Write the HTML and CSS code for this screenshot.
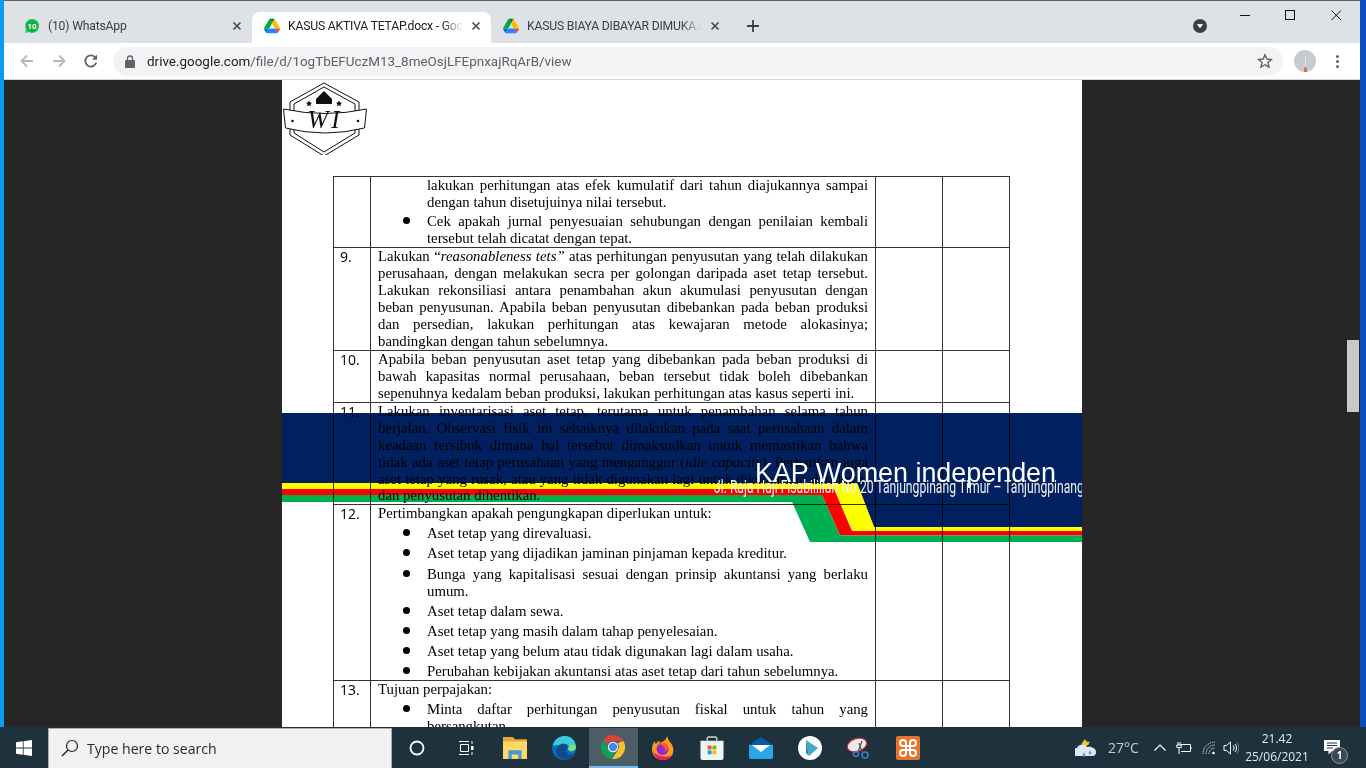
FILE: index.html
```html
<!DOCTYPE html>
<html>
<head>
    <title>KASUS AKTIVA TETAP.docx</title>
    <link rel="stylesheet" href="styles.css">
</head>
<body>
    <svg class="defs" width="0" height="0">
        <symbol id="drive" viewBox="0 0 87.3 78">
            <path d="M6.6 66.85l3.85 6.65c.8 1.4 1.95 2.5 3.3 3.3L27.5 53H0c0 1.55.4 3.1 1.2 4.5z" fill="#0066da"/>
            <path d="M43.65 25L29.9 1.2c-1.35.8-2.5 1.9-3.3 3.3L1.2 48.5A9.06 9.06 0 000 53h27.5z" fill="#00ac47"/>
            <path d="M73.55 76.8c1.35-.8 2.5-1.9 3.3-3.3l1.6-2.75 7.65-13.25c.8-1.4 1.2-2.95 1.2-4.5H59.8l5.85 11.5z" fill="#ea4335"/>
            <path d="M43.65 25L57.4 1.2C56.05.4 54.5 0 52.9 0H34.4c-1.6 0-3.15.45-4.5 1.2z" fill="#00832d"/>
            <path d="M59.8 53H27.5L13.75 76.8c1.35.8 2.9 1.2 4.5 1.2h50.8c1.6 0 3.15-.45 4.5-1.2z" fill="#2684fc"/>
            <path d="M73.4 26.5L60.7 4.5c-.8-1.4-1.95-2.5-3.3-3.3L43.65 25 59.8 53h27.45c0-1.55-.4-3.1-1.2-4.5z" fill="#ffba00"/>
        </symbol>
        <symbol id="close" viewBox="0 0 10 10">
            <path d="M1.5 1.5l7 7M8.5 1.5l-7 7" fill="none" stroke="#4a4d52" stroke-width="1.7"/>
        </symbol>
    </svg>

    <div class="window">
        <div class="tabstrip">
            <div class="tab">
                <svg class="favicon" viewBox="0 0 16 16">
                    <path d="M1 15l1-3.8A7 7 0 1 1 4.700 14z" fill="#25d366"/>
                    <circle cx="8" cy="8" r="6.200" fill="#13b04a"/>
                    <text x="8" y="10.800" class="fav-num">10</text>
                </svg>
                <span class="tab-title">(10) WhatsApp</span>
                <svg class="tab-x"><use href="#close"/></svg>
            </div>
            <div class="tab active">
                <svg class="favicon"><use href="#drive"/></svg>
                <span class="tab-title">KASUS AKTIVA TETAP.docx - Google Drive</span>
                <svg class="tab-x"><use href="#close"/></svg>
            </div>
            <div class="tab">
                <svg class="favicon"><use href="#drive"/></svg>
                <span class="tab-title">KASUS BIAYA DIBAYAR DIMUKA.docx - Google Drive</span>
                <svg class="tab-x"><use href="#close"/></svg>
            </div>
            <svg class="newtab" viewBox="0 0 12 12"><path d="M6 0v12M0 6h12" stroke="#3c4043" stroke-width="1.800"/></svg>
            <svg class="tabsearch" viewBox="0 0 14 14">
                <circle cx="7" cy="7" r="7" fill="#3c4043"/>
                <path d="M3.700 5h6.600L7 9.300z" fill="#fff"/>
            </svg>
            <div class="winbtns">
                <svg viewBox="0 0 46 29"><path d="M18 14.500h10" stroke="#111" stroke-width="1"/></svg>
                <svg viewBox="0 0 46 29"><rect x="17.500" y="9.500" width="9" height="9" fill="none" stroke="#111"/></svg>
                <svg viewBox="0 0 46 29"><path d="M17.500 9.500l9.500 9.500M27 9.500L17.500 19" stroke="#111" stroke-width="1" fill="none"/></svg>
            </div>
        </div>

        <div class="toolbar">
            <svg class="nav" viewBox="0 0 16 16"><path d="M14 8H3M8 2.500L2.500 8 8 13.500" fill="none" stroke="#b4b7bb" stroke-width="1.800"/></svg>
            <svg class="nav" viewBox="0 0 16 16"><path d="M2 8h11M8 2.500L13.500 8 8 13.500" fill="none" stroke="#b4b7bb" stroke-width="1.800"/></svg>
            <svg class="nav" viewBox="0 0 16 16"><path d="M13.300 9.500A5.600 5.600 0 1 1 12 4.100" fill="none" stroke="#5f6368" stroke-width="1.800"/><path d="M14 1.500v5.200H8.800z" fill="#5f6368"/></svg>
            <div class="omnibox">
                <svg class="lock" viewBox="0 0 10 13"><path d="M2.500 5V3.500a2.500 2.500 0 0 1 5 0V5" fill="none" stroke="#5f6368" stroke-width="1.300"/><rect y="5" width="10" height="8" rx="1" fill="#5f6368"/></svg>
                <span class="url"><b>drive.google.com</b>/file/d/1ogTbEFUczM13_8meOsjLFEpnxajRqArB/view</span>
                <svg class="star" viewBox="0 0 16 16"><path d="M8 1.800l1.900 4.200 4.500.5-3.400 3 1 4.500L8 11.700 4 14l1-4.500-3.400-3 4.500-.5z" fill="none" stroke="#5f6368" stroke-width="1.400"/></svg>
            </div>
            <svg class="avatar" viewBox="0 0 22 22">
                <circle cx="11" cy="11" r="11" fill="#c4ccd2"/>
                <path d="M10 22l.5-5h2l.5 5z" fill="#d9683a"/>
                <path d="M11.500 17V7" stroke="#e3e7ea" stroke-width="1"/>
            </svg>
            <div class="menu"><i></i><i></i><i></i></div>
        </div>

        <div class="viewer">
            <div class="page">
                <div class="page-head">
                    <svg class="logo" viewBox="0 0 84 73">
                        <path d="M41 1L7 20v33l34 21 35-21V20z" fill="#fff" stroke="#111" stroke-width="1"/>
                        <path d="M41 5L11 22v29l30 19 31-19V22z" fill="#fff" stroke="#111" stroke-width="1"/>
                        <path d="M41 9l8 8v5H33v-5z" fill="#111"/>
                        <path d="M26 18.500l1 2 2 .3-1.500 1.500.4 2-1.900-1-1.900 1 .4-2-1.500-1.500 2-.3zM56 18.500l1 2 2 .3-1.500 1.500.4 2-1.900-1-1.900 1 .4-2-1.500-1.500 2-.3z" fill="#111"/>
                        <path d="M0.500 27Q42 36 83.500 27L81.500 46Q42 56 2.500 46z" fill="#fff" stroke="#111" stroke-width="1"/>
                        <circle cx="9.500" cy="39" r="1.300" fill="#111"/>
                        <circle cx="75" cy="39" r="1.300" fill="#111"/>
                        <text x="42" y="46" class="logo-text">WI</text>
                    </svg>
                </div>

                <svg class="banner" viewBox="0 0 800 129">
                    <path d="M0 0H800V114H592L575 70H0z" fill="#002060"/>
                    <path d="M0 70H575L592 114H800V118H570L552 76H0z" fill="#ffff00"/>
                    <path d="M0 76H552L570 118H800V122.500H558L540 82H0z" fill="#ff0000"/>
                    <path d="M0 82H540L558 122.500H800V129H528L510 89H0z" fill="#00b050"/>
                </svg>

                <table class="doc">
                    <colgroup>
                        <col class="c-no"><col class="c-text"><col class="c-tick"><col class="c-tick">
                    </colgroup>
                    <tr class="row-cont">
                        <td></td>
                        <td>
                            <p class="cont">lakukan perhitungan atas efek kumulatif dari tahun diajukannya sampai dengan tahun disetujuinya nilai tersebut.</p>
                            <ul>
                                <li>Cek apakah jurnal penyesuaian sehubungan dengan penilaian kembali tersebut telah dicatat dengan tepat.</li>
                            </ul>
                        </td>
                        <td></td><td></td>
                    </tr>
                    <tr>
                        <td class="num">9.</td>
                        <td><p>Lakukan “<em>reasonableness tets”</em> atas perhitungan penyusutan yang telah dilakukan perusahaan, dengan melakukan secra per golongan daripada aset tetap tersebut. Lakukan rekonsiliasi antara penambahan akun akumulasi penyusutan dengan beban penyusunan. Apabila beban penyusutan dibebankan pada beban produksi dan persedian, lakukan perhitungan atas kewajaran metode alokasinya; bandingkan dengan tahun sebelumnya.</p></td>
                        <td></td><td></td>
                    </tr>
                    <tr>
                        <td class="num">10.</td>
                        <td><p>Apabila beban penyusutan aset tetap yang dibebankan pada beban produksi di bawah kapasitas normal perusahaan, beban tersebut tidak boleh dibebankan sepenuhnya kedalam beban produksi, lakukan perhitungan atas kasus seperti ini.</p></td>
                        <td></td><td></td>
                    </tr>
                    <tr class="row-tight">
                        <td class="num">11.</td>
                        <td><p>Lakukan inventarisasi aset tetap, terutama untuk penambahan selama tahun berjalan. Observasi fisik ini sebaiknya dilakukan pada saat perusahaan dalam keadaan tersibuk dimana hal tersebut dimaksudkan untuk memastikan bahwa tidak ada aset tetap perusahaan yang menganggur (<em>idle capacity</em>). Perhatikan juga aset tetap yang rusak, atau yang tidak digunakan lagi untuk dikeluarkan dari kartu dan penyusutan dihentikan.</p></td>
                        <td></td><td></td>
                    </tr>
                    <tr>
                        <td class="num">12.</td>
                        <td>
                            <p>Pertimbangkan apakah pengungkapan diperlukan untuk:</p>
                            <ul>
                                <li>Aset tetap yang direvaluasi.</li>
                                <li>Aset tetap yang dijadikan jaminan pinjaman kepada kreditur.</li>
                                <li>Bunga yang kapitalisasi sesuai dengan prinsip akuntansi yang berlaku umum.</li>
                                <li>Aset tetap dalam sewa.</li>
                                <li>Aset tetap yang masih dalam tahap penyelesaian.</li>
                                <li>Aset tetap yang belum atau tidak digunakan lagi dalam usaha.</li>
                                <li>Perubahan kebijakan akuntansi atas aset tetap dari tahun sebelumnya.</li>
                            </ul>
                        </td>
                        <td></td><td></td>
                    </tr>
                    <tr>
                        <td class="num">13.</td>
                        <td>
                            <p>Tujuan perpajakan:</p>
                            <ul>
                                <li>Minta daftar perhitungan penyusutan fiskal untuk tahun yang bersangkutan.</li>
                            </ul>
                        </td>
                        <td></td><td></td>
                    </tr>
                </table>

                <div class="banner-title">KAP Women independen</div>
                <div class="banner-addr"><span>Jl. Raja Haji Fisabilillah No.20 Tanjungpinang Timur – Tanjungpinang</span></div>
            </div>
            <div class="scrollthumb"></div>
        </div>
    </div>

    <div class="taskbar">
        <div class="start">
            <svg viewBox="0 0 16 16"><path d="M0 2.300L6.800 1.300V7.600H0zM7.600 1.200L16 0V7.600H7.600zM0 8.400H6.800V14.700L0 13.700zM7.600 8.400H16V16L7.600 14.800z" fill="#fff"/></svg>
        </div>
        <div class="search">
            <svg viewBox="0 0 18 18"><circle cx="11" cy="7" r="5.500" fill="none" stroke="#222" stroke-width="1.200"/><path d="M7 11L1 17" stroke="#222" stroke-width="1.400"/></svg>
            <span>Type here to search</span>
        </div>
        <div class="tb-icons">
            <div class="tb-item">
                <svg viewBox="0 0 16 16"><circle cx="8" cy="8" r="6.500" fill="none" stroke="#fff" stroke-width="1.800"/></svg>
            </div>
            <div class="tb-item">
                <svg viewBox="0 0 16 16"><path d="M1 1.500h10M1 14.500h10M2.500 4.500h8v7h-8z" fill="none" stroke="#fff" stroke-width="1"/><path d="M14 1v3M14 12v3" stroke="#fff"/><rect x="13" y="6" width="2.500" height="4" fill="#fff"/></svg>
            </div>
            <div class="tb-item">
                <svg viewBox="0 0 22 20"><path d="M0 0h9l2 2h11v18H0z" fill="#e8a93a"/><rect y="4" width="22" height="16" fill="#ffd768"/><path d="M5 20v-8h12v8h-3v-4H8v4z" fill="#3f9ad6"/></svg>
            </div>
            <div class="tb-item">
                <svg viewBox="0 0 24 24">
                    <circle cx="12" cy="12" r="12" fill="#0f6cbd"/>
                    <path d="M1 9C3 2 9 0 13 0c6 0 10 4 11 10 .5 4-3 6-6 5-3-1-2-3-1-4-1-3-4-4-7-3-4 1-7 2-9 1z" fill="#3ccbda"/>
                    <path d="M24 11c0 2-3 5-6 4-3-1-2-3-1-4 1-3 6-3 7 0z" fill="#7fe06b"/>
                    <path d="M9 8c3-1 6 0 7 3-3 2-3 5 0 7 2 1 4 1 6 0-3 5-9 7-14 4C3 19 2 13 9 8z" fill="#114a8b"/>
                </svg>
            </div>
            <div class="tb-item selected">
                <svg viewBox="0 0 24 24">
                    <path d="M12 0a12 12 0 0 1 10.400 6H12a6 6 0 0 0-5.700 4L2.600 4.300A12 12 0 0 1 12 0z" fill="#db4437"/>
                    <path d="M22.400 6A12 12 0 0 1 11 24l5.300-8A6 6 0 0 0 16.500 8z" fill="#fbc02d"/>
                    <path d="M2.600 4.300L7.500 13a5.500 5.500 0 0 0 7.500 3.500L11 24A12 12 0 0 1 2.600 4.300z" fill="#0f9d58"/>
                    <circle cx="12" cy="12" r="5.200" fill="#fff"/>
                    <circle cx="12" cy="12" r="4.200" fill="#4285f4"/>
                </svg>
            </div>
            <div class="tb-item">
                <svg viewBox="0 0 24 24">
                    <path d="M16 0c1 2 1 4 3 6 3 3 4 7 3 11-1 4-5 7-10 7C6 24 1 20 1 13c0-3 1-6 3-8 0 1 0 2 1 3 1-2 2-3 4-3-1 1-1 2-1 2 3-1 7-2 8-7z" fill="#ff9a1f"/>
                    <path d="M2 15c1 5 5 9 10 9 4 0 7-2 9-5-3 2-8 2-11 1-4-1-7-3-8-5z" fill="#f5156c"/>
                    <circle cx="11.500" cy="13" r="6" fill="#8e2cc5"/>
                    <path d="M6 9c3-1 4 0 6 1 2 2 3 3 1 6 3-1 4-3 4-5-1-4-7-6-11-2z" fill="#ff5a2e"/>
                </svg>
            </div>
            <div class="tb-item">
                <svg viewBox="0 0 24 25">
                    <path d="M7 5V3a2 2 0 0 1 2-2h6a2 2 0 0 1 2 2v2" fill="none" stroke="#d5d7d8" stroke-width="1.500"/>
                    <path d="M0 5h24v18a2 2 0 0 1-2 2H2a2 2 0 0 1-2-2z" fill="#f3f3f3"/>
                    <rect x="7.500" y="10" width="4" height="4" fill="#f25022"/>
                    <rect x="12.500" y="10" width="4" height="4" fill="#7fba00"/>
                    <rect x="7.500" y="15" width="4" height="4" fill="#00a4ef"/>
                    <rect x="12.500" y="15" width="4" height="4" fill="#ffb900"/>
                </svg>
            </div>
            <div class="tb-item">
                <svg viewBox="0 0 24 22">
                    <path d="M0 8L12 0l12 8v12a2 2 0 0 1-2 2H2a2 2 0 0 1-2-2z" fill="#0c5a9e"/>
                    <path d="M0 8h24v12a2 2 0 0 1-2 2H2a2 2 0 0 1-2-2z" fill="#28a8ea"/>
                    <path d="M3 8h18l-9 7z" fill="#fff"/>
                </svg>
            </div>
            <div class="tb-item">
                <svg viewBox="0 0 24 24"><circle cx="12" cy="12" r="12" fill="#fff"/><path d="M8 4l12 8-9 8z" fill="#3fa9c9"/><path d="M8 4l3 16-3-3z" fill="#2683a5"/></svg>
            </div>
            <div class="tb-item">
                <svg viewBox="0 0 24 24">
                    <ellipse cx="10" cy="9" rx="10" ry="6.500" transform="rotate(-18 10 9)" fill="#e9e9e9" stroke="#c8243c" stroke-width="1.200"/>
                    <path d="M12 7l3 9M15 5l-4 11" stroke="#555" stroke-width="1.200"/>
                    <circle cx="9" cy="18" r="2.500" fill="none" stroke="#3a7fc1" stroke-width="1.600"/>
                    <circle cx="18" cy="19" r="3" fill="none" stroke="#3a7fc1" stroke-width="1.600"/>
                </svg>
            </div>
            <div class="tb-item">
                <svg viewBox="0 0 24 24">
                    <rect width="24" height="24" rx="2" fill="#e8742b"/>
                    <path d="M10 10V7a3 3 0 1 0-3 3h10a3 3 0 1 0-3-3v10a3 3 0 1 0 3-3H7a3 3 0 1 0 3 3z" fill="none" stroke="#fff" stroke-width="2"/>
                </svg>
            </div>
        </div>
        <div class="tray">
            <svg class="weather" viewBox="0 0 24 24">
                <path d="M10 3l1.500 2.500 3 .2-1 3-4 2-3-3z" fill="#f4c430"/>
                <path d="M2 20a4 4 0 0 1 0-8c1-4 8-5 10-1 5-1 9 2 9 5a4 4 0 0 1-3 4z" fill="#dbe9f6"/>
                <path d="M9 16l-1.500 3a1.500 1.500 0 0 0 3 0zM15 14l-1.500 3a1.500 1.500 0 0 0 3 0z" fill="#5aa7e6"/>
            </svg>
            <span class="temp">27°C</span>
            <svg class="t-chev" viewBox="0 0 12 7"><path d="M.5 6.500L6 1l5.500 5.500" fill="none" stroke="#fff" stroke-width="1.100"/></svg>
            <svg class="t-batt" viewBox="0 0 16 12"><path d="M5 2.500h9.500v7H5M15 5v2" fill="none" stroke="#fff" stroke-width="1"/><path d="M2 0v3M4 0v3M.8 3h4.400v2.500H.8zM3 5.500V12" stroke="#fff" stroke-width="1" fill="none"/></svg>
            <svg class="t-wifi" viewBox="0 0 14 14"><path d="M1 13a12 12 0 0 1 12-12M4 13a9 9 0 0 1 9-9M7 13a6 6 0 0 1 6-6" fill="none" stroke="#c9ced1" stroke-width="1" stroke-dasharray="1.500 .7"/><circle cx="11.500" cy="12" r="1.300" fill="#fff"/></svg>
            <svg class="t-vol" viewBox="0 0 16 14"><path d="M1 4.500h2.500L7.500 1v12L3.500 9.500H1z" fill="none" stroke="#fff" stroke-width="1"/><path d="M10 4.500a3.500 3.500 0 0 1 0 5M12 3a6 6 0 0 1 0 8" fill="none" stroke="#fff" stroke-width="1"/><path d="M14 1.500a8.500 8.500 0 0 1 0 11" fill="none" stroke="#7c8b93" stroke-width="1"/></svg>
            <div class="clock"><div>21.42</div><div>25/06/2021</div></div>
            <div class="notif">
                <svg viewBox="0 0 16 15"><path d="M0 0h16v11H8l-3.500 3.500V11H0z" fill="#fff"/><path d="M3 3h10M3 5.500h10M3 8h6" stroke="#1e323d" stroke-width="1"/></svg>
                <span class="notif-badge">1</span>
            </div>
        </div>
    </div>
</body>
</html>
```

FILE: styles.css
```css
html, body {
    margin: 0;
    height: 100%;
    overflow: hidden;
}

body {
    display: flex;
    flex-direction: column;
    height: 768px;
    font-family: Roboto, "Noto Sans", sans-serif;
    background: #0a9cf0;
}

.defs {
    display: none;
}

.window {
    flex: 1;
    min-height: 0;
    display: flex;
    flex-direction: column;
    border-left: 4px solid #0a9bf2;
    border-right: 6px solid #0a4dbf;
}

/* tabs */
.tabstrip {
    height: 42px;
    flex: none;
    display: flex;
    align-items: flex-end;
    background: #dee1e6;
    border-top: 1px solid #5f6368;
    position: relative;
}

.tab {
    width: 239px;
    height: 31px;
    padding: 0 8px 3px 12px;
    box-sizing: border-box;
    display: flex;
    align-items: center;
    gap: 8px;
    color: #3c4043;
    font-size: 12.2px;
    letter-spacing: -.2px;
}

.tab:first-child {
    width: 248px;
    padding-left: 20px;
}

.tab.active {
    background: #fff;
    border-radius: 8px 8px 0 0;
    color: #202124;
}

.tab-title {
    flex: 1;
    white-space: nowrap;
    overflow: hidden;
    -webkit-mask-image: linear-gradient(to right, #000 88%, transparent);
    mask-image: linear-gradient(to right, #000 88%, transparent);
}

.tab:first-child .tab-title {
    -webkit-mask-image: none;
    mask-image: none;
}

.favicon {
    width: 16px;
    height: 16px;
    flex: none;
}

.fav-num {
    font: bold 8px Roboto, sans-serif;
    fill: #fff;
    text-anchor: middle;
}

.tab-x {
    width: 10px;
    height: 10px;
    flex: none;
    margin-right: 2px;
}

.newtab {
    width: 12px;
    height: 12px;
    margin: 0 0 11px 17px;
}

.tabsearch {
    width: 14px;
    height: 14px;
    margin: 0 0 10px 434px;
}

.winbtns {
    display: flex;
    margin-left: auto;
    align-self: flex-start;
}

.winbtns svg {
    width: 46px;
    height: 29px;
    display: block;
}

/* address bar */
.toolbar {
    height: 37px;
    flex: none;
    box-sizing: border-box;
    display: flex;
    align-items: center;
    background: #fff;
    border-bottom: 1px solid #d0d2d5;
    padding-left: 15px;
}

.nav {
    width: 16px;
    height: 16px;
    margin-right: 16px;
}

.omnibox {
    width: 1170px;
    height: 29px;
    margin-left: -2px;
    padding: 0 10px 0 12px;
    box-sizing: border-box;
    display: flex;
    align-items: center;
    background: #f1f3f4;
    border-radius: 15px;
}

.lock {
    width: 10px;
    height: 13px;
    margin-right: 12px;
}

.url {
    flex: 1;
    font-size: 13.45px;
    color: #5f6368;
    white-space: nowrap;
}

.url b {
    font-weight: 400;
    color: #202124;
}

.star {
    width: 16px;
    height: 16px;
    margin-left: auto;
}

.avatar {
    width: 22px;
    height: 22px;
    margin-left: 11px;
}

.menu {
    display: flex;
    flex-direction: column;
    gap: 2px;
    margin-left: 20px;
}

.menu i {
    width: 3px;
    height: 3px;
    border-radius: 50%;
    background: #5f6368;
}

/* pdf viewer */
.viewer {
    flex: 1;
    min-height: 0;
    display: flex;
    justify-content: center;
    background: #262626;
    overflow: hidden;
    position: relative;
}

.page {
    width: 800px;
    flex: none;
    background: #fff;
    position: relative;
    overflow: hidden;
}

.page-head {
    height: 96px;
    box-sizing: border-box;
    padding: 2px 0 0 1px;
}

.logo {
    display: block;
    width: 84px;
    height: 73px;
}

.logo-text {
    font: italic 25px "Liberation Serif", serif;
    letter-spacing: 3px;
    text-anchor: middle;
    fill: #111;
}

.banner {
    position: absolute;
    left: 0;
    top: 333px;
    width: 800px;
    height: 129px;
}

.doc {
    position: relative;
    margin-left: 51px;
    width: 676px;
    table-layout: fixed;
    border-collapse: collapse;
    font: 14.8px/17px "Liberation Serif", serif;
    color: #000;
    mix-blend-mode: multiply;
    filter: blur(.3px);
}

.c-no { width: 37px; }
.c-text { width: 505px; }
.c-tick { width: 67px; }

.doc td {
    border: 1px solid #333;
    padding: 0 7px;
    vertical-align: top;
    text-align: justify;
}

.doc .num {
    padding: 0 0 0 6px;
    font: 14px/17px "Open Sans", sans-serif;
    text-align: left;
}

.doc p {
    margin: 0;
}

.doc .cont {
    padding-left: 49px;
}

.doc ul {
    list-style: none;
    margin: 0;
    padding: 0 0 0 25px;
}

.doc li {
    display: flex;
    gap: 17px;
    margin-top: 3.15px;
}

.row-cont .cont {
    margin-bottom: -1px;
}

.row-tight p {
    line-height: 16.85px;
}

.doc li::before {
    content: "";
    flex: none;
    width: 7px;
    height: 7px;
    margin-top: 4px;
    border-radius: 50%;
    background: #000;
}

.banner-title {
    position: absolute;
    left: 473px;
    top: 378px;
    color: #fff;
    font: 26.9px/30px "Liberation Sans", sans-serif;
    white-space: nowrap;
}

.banner-addr {
    position: absolute;
    left: 432px;
    top: 396px;
    width: 368px;
    height: 21px;
    overflow: hidden;
    color: #f2f2f2;
    font: 18px/21px Roboto, sans-serif;
    white-space: nowrap;
}

.banner-addr span {
    display: inline-block;
    transform: scaleX(.675);
    transform-origin: left;
}

.scrollthumb {
    position: absolute;
    right: 1px;
    top: 260px;
    width: 12px;
    height: 72px;
    background: #c8c8c8;
}

/* taskbar */
.taskbar {
    height: 41px;
    flex: none;
    display: flex;
    align-items: stretch;
    background: #1e323d;
}

.start {
    width: 48px;
    display: flex;
    align-items: center;
    justify-content: center;
}

.start svg {
    width: 16px;
    height: 16px;
}

.search {
    width: 344px;
    box-sizing: border-box;
    margin-top: 1px;
    padding: 0 0 1px 12px;
    display: flex;
    align-items: center;
    gap: 8px;
    background: #f1f1f1;
    border: 1px solid #a8acae;
    border-bottom: 0;
    color: #2b2b2b;
    font: 14.1px "Open Sans", sans-serif;
}

.search svg {
    width: 18px;
    height: 18px;
}

.tb-icons {
    display: flex;
}

.tb-item {
    width: 49.200px;
    box-sizing: border-box;
    display: flex;
    align-items: center;
    justify-content: center;
}

.tb-item svg {
    width: 24px;
    height: 24px;
}

.tb-item:first-child svg,
.tb-item:nth-child(2) svg {
    width: 16px;
    height: 16px;
}

.tb-item.selected {
    background: #4c5d66;
    border-bottom: 2px solid #76b9ed;
    margin-top: 1px;
}

.tray {
    margin-left: auto;
    display: flex;
    align-items: center;
    color: #fff;
    font: 12px "Open Sans", sans-serif;
    padding-right: 14px;
}

.weather {
    width: 24px;
    height: 24px;
    margin-right: 9px;
}

.temp {
    width: 38px;
    font-size: 14px;
    color: #c6cbce;
}

.t-chev {
    width: 12px;
    height: 7px;
    margin: 0 10px 0 8px;
}

.t-batt {
    width: 16px;
    height: 12px;
    margin-right: 10px;
}

.t-wifi {
    width: 14px;
    height: 14px;
    margin-right: 7px;
}

.t-vol {
    width: 16px;
    height: 14px;
}

.clock {
    width: 70px;
    margin-left: 3px;
    text-align: center;
    line-height: 18px;
    color: #e6e9ea;
}

.notif {
    width: 40px;
    position: relative;
    display: flex;
    justify-content: center;
}

.notif svg {
    width: 16px;
    height: 15px;
}

.notif-badge {
    position: absolute;
    left: 19px;
    top: 7px;
    width: 15px;
    height: 15px;
    border-radius: 50%;
    border: 1px solid #8e989d;
    background: #3a4a52;
    font: bold 10px/15px "Open Sans", sans-serif;
    text-align: center;
}
```
